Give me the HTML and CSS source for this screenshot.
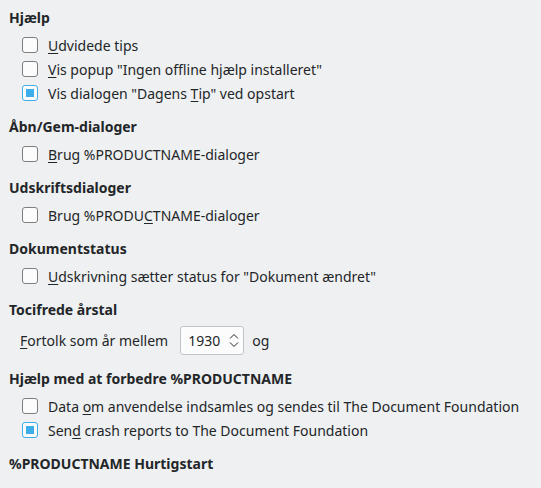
FILE: index.html
```html
<!DOCTYPE html>
<html>
<head>
<meta charset="utf-8">
<link rel="stylesheet" href="styles.css">
</head>
<body>
<div class="page">
  <section class="group">
    <h2 class="title">Hjælp</h2>
    <label class="check"><span class="box"></span><span class="text"><u>U</u>dvidede tips</span></label>
    <label class="check"><span class="box"></span><span class="text"><u>V</u>is popup "Ingen offline hjælp installeret"</span></label>
    <label class="check"><span class="box on"></span><span class="text">Vis dialogen "Dagens <u>T</u>ip" ved opstart</span></label>
  </section>
  <section class="group">
    <h2 class="title">Åbn/Gem-dialoger</h2>
    <label class="check"><span class="box"></span><span class="text"><u>B</u>rug %PRODUCTNAME-dialoger</span></label>
  </section>
  <section class="group">
    <h2 class="title">Udskriftsdialoger</h2>
    <label class="check"><span class="box"></span><span class="text">Brug %PRODU<u>C</u>TNAME-dialoger</span></label>
  </section>
  <section class="group">
    <h2 class="title">Dokumentstatus</h2>
    <label class="check"><span class="box"></span><span class="text"><u>U</u>dskrivning sætter status for "Dokument ændret"</span></label>
  </section>
  <section class="group">
    <h2 class="title">Tocifrede årstal</h2>
    <div class="yearrow">
      <span class="text"><u>F</u>ortolk som år mellem</span>
      <div class="spin">
        <span class="spinval">1930</span>
        <svg class="spinarrows" width="10" height="15" viewBox="0 0 10 15">
          <path d="M1 5.5 L5 1.5 L9 5.5" fill="none" stroke="#232629" stroke-width="1"/>
          <path d="M1 9.5 L5 13.5 L9 9.5" fill="none" stroke="#232629" stroke-width="1"/>
        </svg>
      </div>
      <span class="text">og</span>
    </div>
  </section>
  <section class="group">
    <h2 class="title">Hjælp med at forbedre %PRODUCTNAME</h2>
    <label class="check"><span class="box"></span><span class="text">Data <u>o</u>m anvendelse indsamles og sendes til The Document Foundation</span></label>
    <label class="check"><span class="box on"></span><span class="text">Sen<u>d</u> crash reports to The Document Foundation</span></label>
  </section>
  <section class="group">
    <h2 class="title">%PRODUCTNAME Hurtigstart</h2>
  </section>
</div>
</body>
</html>
```

FILE: styles.css
```css
html, body {
  margin: 0;
  padding: 0;
  background: #eff0f1;
}
body {
  font-family: "Noto Sans", "DejaVu Sans", sans-serif;
  font-size: 14px;
  color: #232629;
  overflow: hidden;
}
.page {
  padding: 8px 0 0 9px;
  display: flex;
  flex-direction: column;
  gap: 11px;
}
.group {
  display: flex;
  flex-direction: column;
}
.title {
  margin: 0 0 6px 0;
  font-size: 14px;
  font-weight: bold;
  line-height: 20px;
}
.check {
  display: flex;
  align-items: center;
  height: 24px;
  padding-left: 13px;
  gap: 10px;
  white-space: nowrap;
}
.text {
  line-height: 24px;
  white-space: nowrap;
}
u {
  text-decoration: underline;
  text-underline-offset: 2px;
}
.box {
  box-sizing: border-box;
  width: 16px;
  height: 16px;
  margin-bottom: 2px;
  border: 1px solid #7c7e80;
  border-radius: 3px;
  background: #fcfcfc;
  flex: none;
  position: relative;
}
.box.on {
  border-color: #3daee9;
}
.box.on::after {
  content: "";
  position: absolute;
  left: 3px;
  top: 3px;
  width: 8px;
  height: 8px;
  background: #3daee9;
}
.yearrow {
  display: flex;
  align-items: center;
  height: 29px;
  padding-left: 11px;
  margin-bottom: 3px;
}
.spin {
  box-sizing: border-box;
  width: 64px;
  height: 29px;
  margin-left: 12px;
  margin-right: 8px;
  border: 1px solid #c2c4c6;
  border-radius: 3px;
  background: #fcfcfc;
  display: flex;
  align-items: center;
  padding-left: 7px;
}
.spinval {
  line-height: 20px;
  width: 41px;
}
.spinarrows {
  display: block;
}
```
